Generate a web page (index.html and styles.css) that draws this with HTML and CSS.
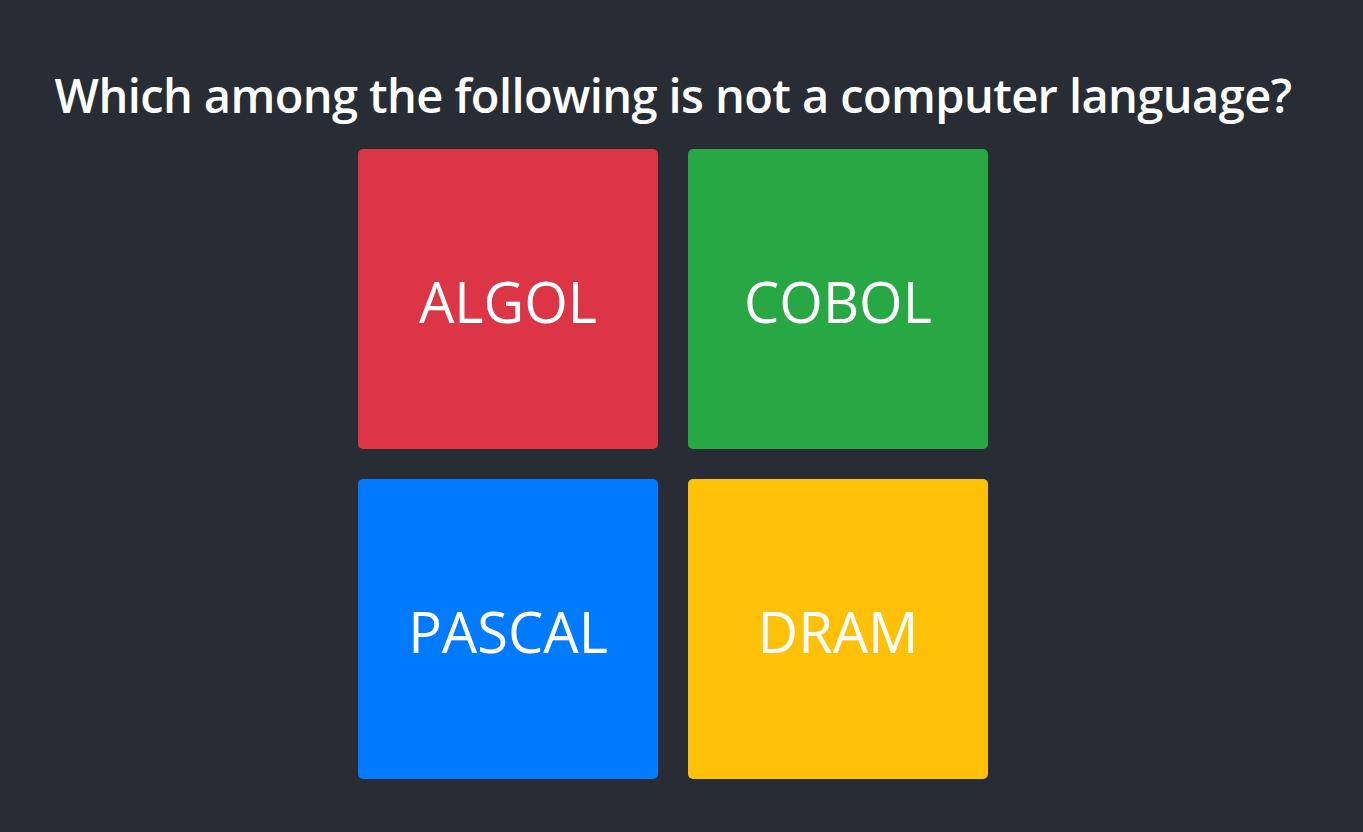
FILE: index.html
```html
<!DOCTYPE html>
<html>
<head>
<meta charset="utf-8">
<link rel="stylesheet" href="styles.css">
</head>
<body>
<div class="app">
  <h1 class="question">Which among the following is not a computer language?</h1>
  <div class="options">
    <button class="option red">ALGOL</button>
    <button class="option green">COBOL</button>
    <button class="option blue">PASCAL</button>
    <button class="option yellow">DRAM</button>
  </div>
</div>
</body>
</html>
```
FILE: styles.css
```css
html, body {
  margin: 0;
  padding: 0;
  background: #282c34;
}
body {
  font-family: "Open Sans", "Noto Sans", sans-serif;
  color: #fff;
  overflow: hidden;
}
.app {
  width: 1346px;
  height: 832px;
  padding-top: 67px;
  box-sizing: border-box;
  display: flex;
  flex-direction: column;
  align-items: center;
}
.question {
  margin: 0 0 25px 0;
  font-size: 47px;
  line-height: 57px;
  font-weight: 600;
  letter-spacing: -0.6px;
  white-space: nowrap;
}
.options {
  display: grid;
  grid-template-columns: 300px 300px;
  grid-auto-rows: 300px;
  gap: 30px;
}
.option {
  border: none;
  border-radius: 5px;
  color: #fff;
  font-family: inherit;
  font-size: 56px;
  font-weight: 400;
  line-height: 1;
  padding: 4px 0 0 0;
  cursor: pointer;
}
.red { background: #dc3545; }
.green { background: #28a745; }
.blue { background: #007bff; }
.yellow { background: #ffc107; }
```
